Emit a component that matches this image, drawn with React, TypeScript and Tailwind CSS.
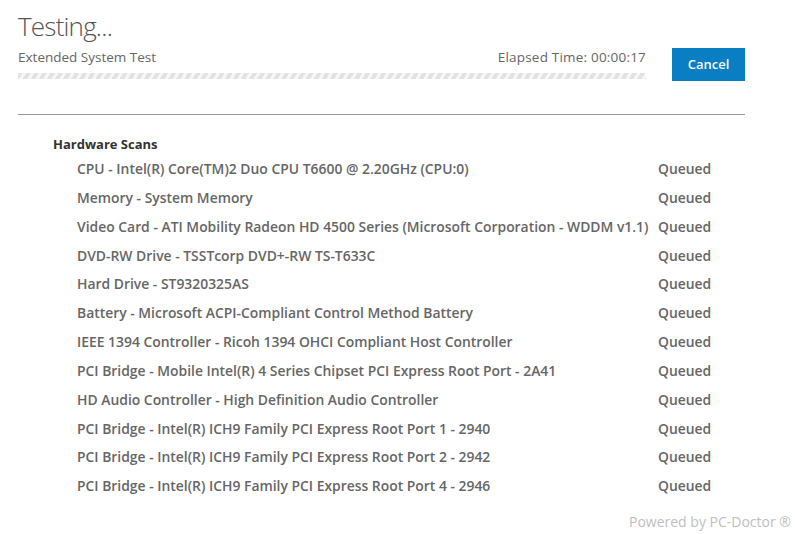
const scans = [
  "CPU - Intel(R) Core(TM)2 Duo CPU T6600 @ 2.20GHz (CPU:0)",
  "Memory - System Memory",
  "Video Card - ATI Mobility Radeon HD 4500 Series (Microsoft Corporation - WDDM v1.1)",
  "DVD-RW Drive - TSSTcorp DVD+-RW TS-T633C",
  "Hard Drive - ST9320325AS",
  "Battery - Microsoft ACPI-Compliant Control Method Battery",
  "IEEE 1394 Controller - Ricoh 1394 OHCI Compliant Host Controller",
  "PCI Bridge - Mobile Intel(R) 4 Series Chipset PCI Express Root Port - 2A41",
  "HD Audio Controller - High Definition Audio Controller",
  "PCI Bridge - Intel(R) ICH9 Family PCI Express Root Port 1 - 2940",
  "PCI Bridge - Intel(R) ICH9 Family PCI Express Root Port 2 - 2942",
  "PCI Bridge - Intel(R) ICH9 Family PCI Express Root Port 4 - 2946",
];

export default function App() {
  return (
    <div className="relative w-[795px] h-[534px] bg-white overflow-hidden font-['Open_Sans',sans-serif]">
      <div className="pl-[18px] pr-[50px] pt-[10px]">
        <h1 className="text-[26px] leading-[32px] font-light text-[#555] tracking-[-0.8px]">Testing...</h1>

        <div className="flex items-start mt-[6px]">
          <div className="w-[628px]">
            <div className="flex justify-between text-[13.5px] leading-[18px] text-[#666]">
              <span>Extended System Test</span>
              <span className="tracking-[0.2px]">Elapsed Time: 00:00:17</span>
            </div>
            <div className="mt-[7px] h-[6px] bg-[repeating-linear-gradient(120deg,#e2e2e2_0_4px,#f7f7f7_4px_7px)]" />
          </div>
          <button className="ml-[26px] w-[73px] h-[33px] bg-[#0a7ec2] text-white text-[13px] font-semibold">
            Cancel
          </button>
        </div>

        <div className="mt-[33px] h-px bg-[#999]" />

        <div className="pl-[35px] pt-[20px]">
          <h2 className="text-[13px] leading-[18px] font-bold text-[#333]">Hardware Scans</h2>
          <ul className="mt-[2px] pl-[24px] flex flex-col">
            {scans.map((s) => (
              <li key={s} className="flex h-[28.85px] items-center text-[13.9px] font-semibold text-[#666]">
                <span className="w-[581px] whitespace-nowrap">{s}</span>
                <span>Queued</span>
              </li>
            ))}
          </ul>
        </div>
      </div>

      <div className="absolute right-[4px] bottom-[2px] text-[14px] text-[#c0c0c0]">Powered by PC-Doctor ®</div>
    </div>
  );
}
